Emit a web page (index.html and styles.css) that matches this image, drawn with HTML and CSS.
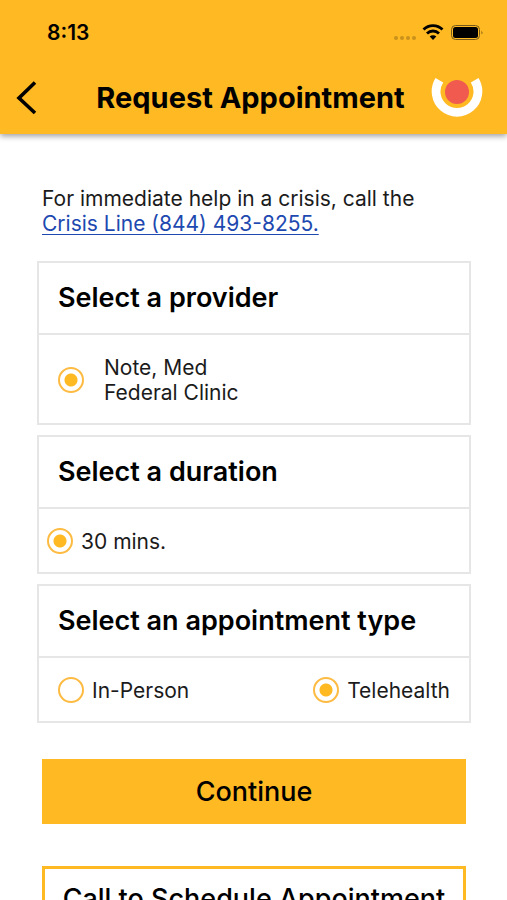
FILE: index.html
```html
<!DOCTYPE html>
<html lang="en">
<head>
<meta charset="utf-8">
<meta name="viewport" content="width=device-width, initial-scale=1">
<title>Request Appointment</title>
<link rel="stylesheet" href="styles.css">
</head>
<body>
<div class="screen">
  <header class="top">
    <div class="status">
      <span class="clock">8:13</span>
      <svg class="status-icons" width="92" height="20" viewBox="0 0 92 20" aria-hidden="true">
        <g fill="#c9921d"><circle cx="4" cy="15" r="2"/><circle cx="10" cy="15" r="2"/><circle cx="16" cy="15" r="2"/><circle cx="22" cy="15" r="2"/></g>
        <g fill="none" stroke="#000" stroke-width="2.8"><path d="M31.500 6.600a13.500 13.500 0 0 1 19 0"/><path d="M35 10.500a8.500 8.500 0 0 1 12 0"/></g>
        <path d="M41 17l-3.300-3.400a4.700 4.700 0 0 1 6.600 0z"/>
        <rect x="59.500" y="2.500" width="28" height="14" rx="4" fill="none" stroke="#765a1c"/>
        <rect x="61" y="4" width="25" height="11" rx="2.500"/>
        <path d="M89.500 7.500q1.800 2 0 4z" fill="#765a1c"/>
      </svg>
    </div>
    <div class="bar">
      <button class="back" type="button" aria-label="Back">
        <svg width="22" height="36" viewBox="0 0 22 36" aria-hidden="true"><path d="M19 2.500L3 18l16 15" fill="none" stroke="#000" stroke-width="3.600"/></svg>
      </button>
      <h1 class="title">Request Appointment</h1>
      <svg class="logo" width="52" height="42" viewBox="0 0 52 42" aria-hidden="true">
        <path d="M4.500 1L12.200 5.500A16.500 16.500 0 1 0 39.800 5.500L47.500 1A25.300 25.300 0 1 1 4.500 1z" fill="#fff"/>
        <circle cx="26" cy="15" r="12" fill="#f05a4f"/>
      </svg>
    </div>
  </header>
  <main class="content">
    <p class="crisis">For immediate help in a crisis, call the<br><a href="tel:8444938255">Crisis Line (844) 493-8255.</a></p>
    <form class="form">
      <section class="card">
        <h2>Select a provider</h2>
        <div class="options provider">
          <label class="option"><input type="radio" name="provider" checked><span>Note, Med<br>Federal Clinic</span></label>
        </div>
      </section>
      <section class="card">
        <h2>Select a duration</h2>
        <div class="options duration">
          <label class="option"><input type="radio" name="duration" checked><span>30 mins.</span></label>
        </div>
      </section>
      <section class="card">
        <h2>Select an appointment type</h2>
        <div class="options">
          <label class="option"><input type="radio" name="type"><span>In-Person</span></label>
          <label class="option"><input type="radio" name="type" checked><span>Telehealth</span></label>
        </div>
      </section>
      <div class="actions">
        <button class="btn primary" type="button">Continue</button>
        <button class="btn outline" type="button">Call to Schedule Appointment</button>
      </div>
    </form>
  </main>
</div>
</body>
</html>
```
FILE: styles.css
```css
* { box-sizing: border-box; }
body {
  margin: 0;
  background: #fff;
  color: #1b1b1b;
  font: 21px/25px Inter, "Liberation Sans", sans-serif;
}
h1, h2, p { margin: 0; }
button { font: inherit; cursor: pointer; border-radius: 0; }
.screen { height: 100vh; overflow: hidden; }
.top {
  height: 134px;
  background: #ffb923;
  color: #000;
  box-shadow: 0 2px 6px rgba(0, 0, 0, 0.4);
}
.status {
  display: flex;
  align-items: center;
  justify-content: space-between;
  height: 64px;
  padding: 1px 23px 0 47px;
}
.clock { font-weight: 600; }
.bar {
  display: flex;
  align-items: center;
  justify-content: space-between;
  height: 68px;
  padding: 0 24px 0 16px;
}
.back { display: flex; padding: 0; border: 0; background: none; }
.title { padding-left: 32px; font-size: 29px; line-height: 36px; font-weight: 700; white-space: nowrap; }
.logo { flex: none; }
.content { padding: 52px 36px 0; }
.crisis { padding: 0 6px; }
.crisis a { color: #1d49b0; text-underline-offset: 3px; text-decoration-thickness: 1px; }
.form { display: flex; flex-direction: column; gap: 10px; margin-top: 25px; }
.card { border: 2px solid #e6e6e6; margin-left: 1px; }
.card h2 {
  padding: 17px 19px;
  border-bottom: 2px solid #e6e6e6;
  color: #000;
  font-size: 27px;
  line-height: 36px;
  font-weight: 600;
}
.options { display: flex; justify-content: space-between; padding: 19px 19px 18px; }
.option { display: flex; align-items: center; gap: 8px; }
.provider { padding-top: 20px; }
.provider .option { gap: 20px; }
.duration { padding-left: 8px; }
input[type="radio"] {
  appearance: none;
  width: 26px;
  height: 26px;
  margin: 0;
  border: 2px solid #fdbb42;
  border-radius: 50%;
}
input[type="radio"]:checked { background: radial-gradient(circle, #ffb923 6px, transparent 7px); }
.actions { display: flex; flex-direction: column; gap: 42px; padding: 26px 5px 0 6px; }
.btn { height: 65px; padding: 0; color: #000; font-size: 27px; font-weight: 500; white-space: nowrap; }
.primary { border: 0; background: #ffb923; }
.outline { border: 3px solid #ffb923; background: #fff; }
```
